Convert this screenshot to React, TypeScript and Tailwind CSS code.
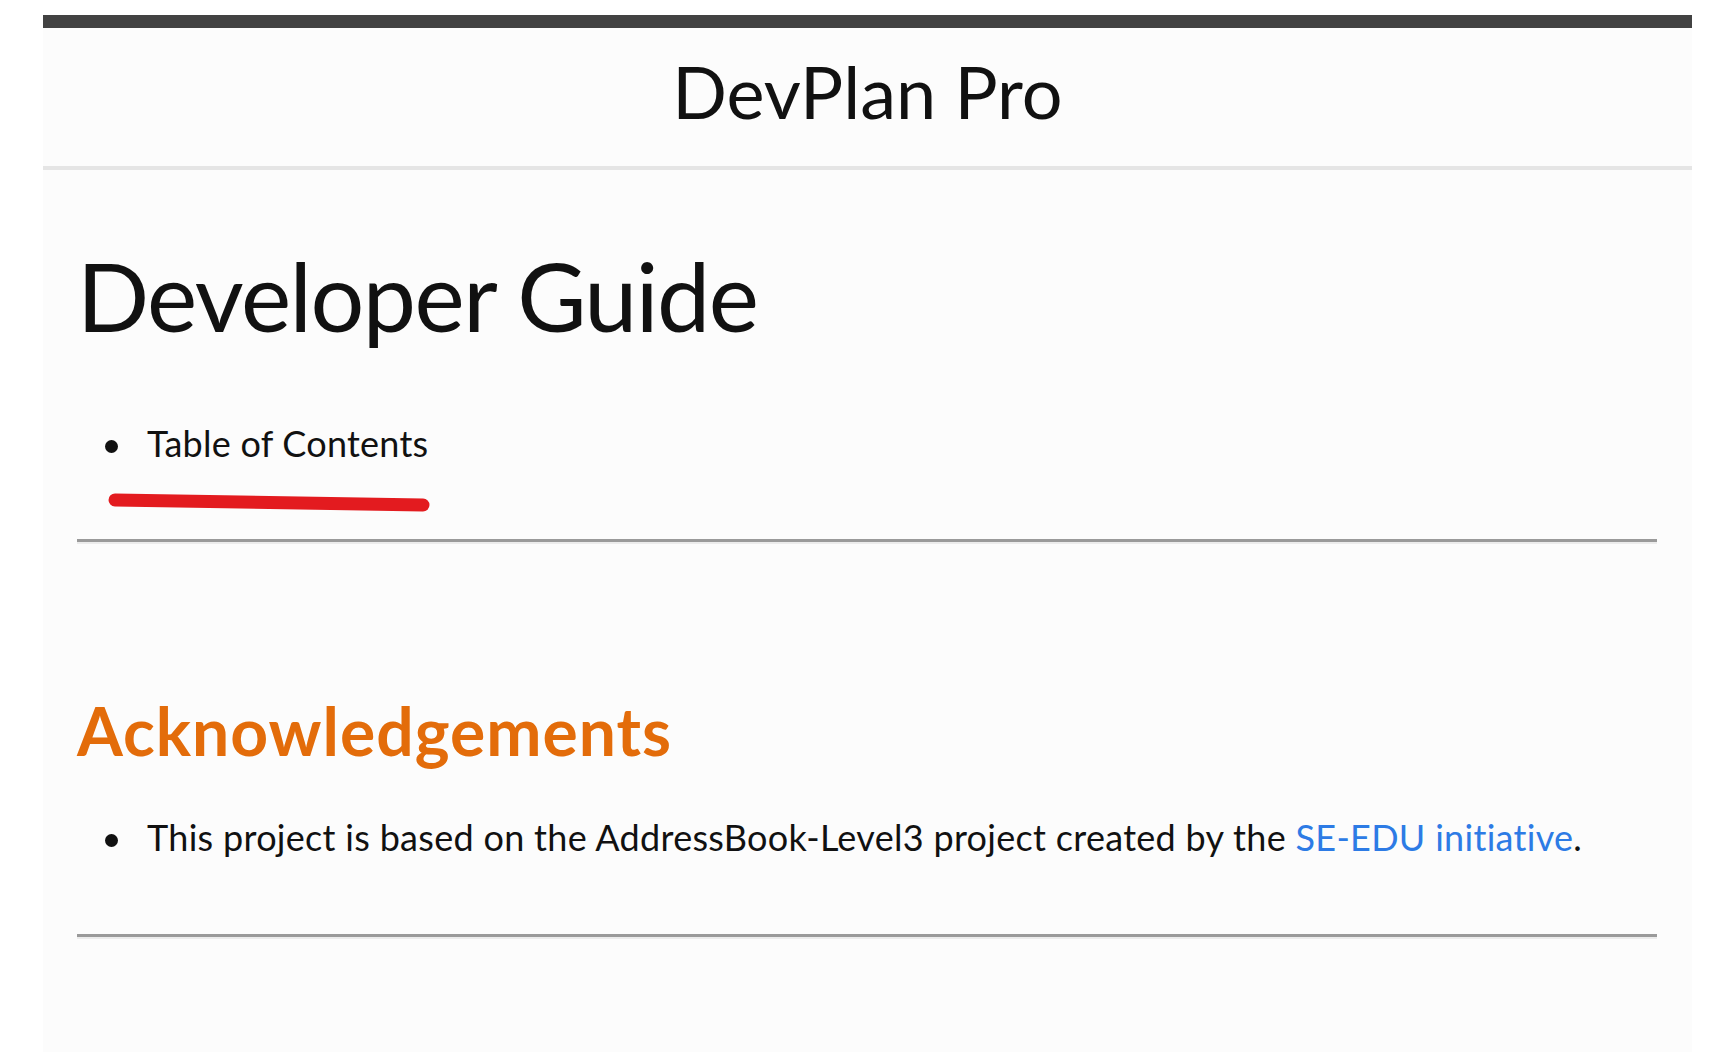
import React from "react";

function Bullet({ children, className = "" }: { children: React.ReactNode; className?: string }) {
  return (
    <li className={"flex items-start " + className}>
      <span className="mt-[18px] ml-[28px] h-[13px] w-[13px] shrink-0 rounded-full bg-[#111111]" />
      <span className="ml-[29px]">{children}</span>
    </li>
  );
}

function Rule() {
  return <div className="h-[5px] border-t-[3px] border-b-2 border-t-[#9a9a9a] border-b-[#ececec]" />;
}

export default function App() {
  return (
    <div
      className="min-h-screen bg-white pt-[15px] pl-[43px] pr-[42px]"
      style={{ fontFamily: "Lato, 'Open Sans', sans-serif" }}
    >
      <div className="min-h-[1037px] bg-[#fcfcfc] text-[#111111]">
        <div className="h-[13px] bg-[#424242]" />
        <header className="h-[142px] border-b-4 border-[#e5e5e5] pt-[20px] text-center">
          <div className="text-[72px] leading-[86px]">DevPlan Pro</div>
        </header>
        <main className="pl-[34px] pr-[35px]">
          <h1 className="mt-[68px] text-[95px] leading-[114px] font-normal tracking-[-1.5px]">
            Developer Guide
          </h1>
          <ul className="mt-[70px] text-[36px] leading-[43px]">
            <Bullet className="tracking-[0.25px]">Table of Contents</Bullet>
          </ul>
          <div className="mt-[26px] ml-[31px] h-[24px]">
            <svg width="322" height="24" viewBox="0 0 322 24">
              <path
                d="M 7 9 Q 160 11 315 14"
                fill="none"
                stroke="#e31b1f"
                strokeWidth="13"
                strokeLinecap="round"
              />
            </svg>
          </div>
          <div className="mt-[24px]">
            <Rule />
          </div>
          <h2 className="mt-[147px] text-[66px] leading-[79px] font-bold tracking-[1px] text-[#e36c0a]">
            Acknowledgements
          </h2>
          <ul className="mt-[46px] text-[36px] leading-[43px]">
            <Bullet className="tracking-[0.3px]">
              This project is based on the AddressBook-Level3 project created by the{" "}
              <a className="text-[#2d7be5]">SE-EDU initiative</a>.
            </Bullet>
          </ul>
          <div className="mt-[75px]">
            <Rule />
          </div>
        </main>
      </div>
    </div>
  );
}
